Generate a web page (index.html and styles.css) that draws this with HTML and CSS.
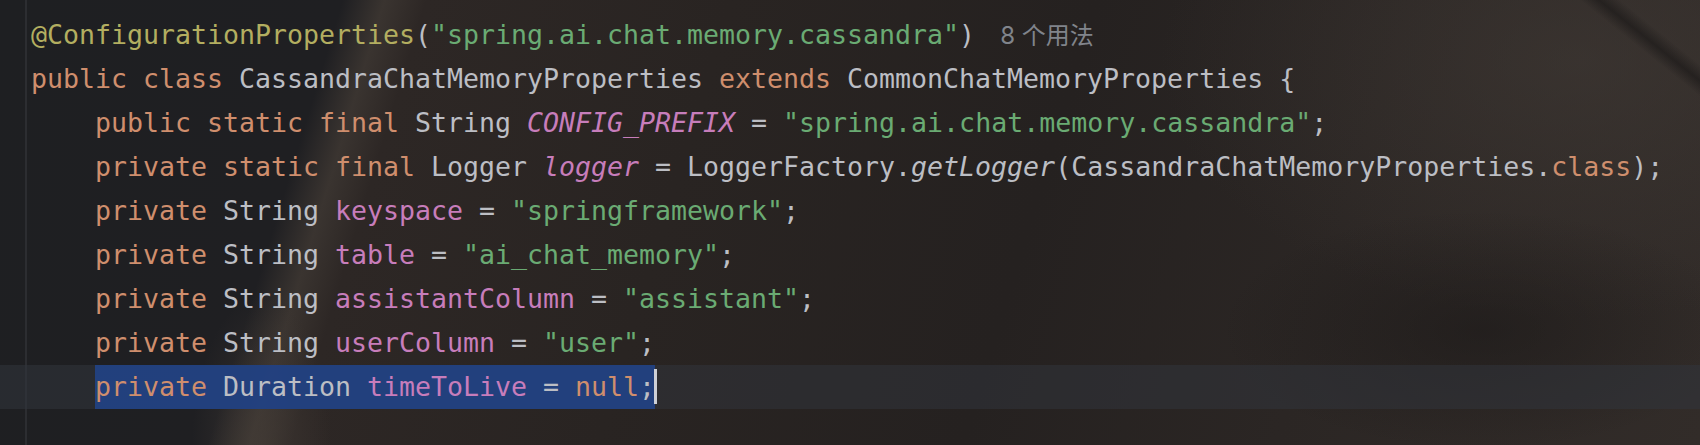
FILE: index.html
```html
<!DOCTYPE html>
<html lang="zh">
<head>
<meta charset="utf-8">
<title>CassandraChatMemoryProperties.java</title>
<link rel="stylesheet" href="styles.css">
</head>
<body>
<div class="editor">
  <div class="code">
    <div class="line"><span class="ann">@ConfigurationProperties</span>(<span class="str">"spring.ai.chat.memory.cassandra"</span>)<span class="hint">8 个用法</span></div>
    <div class="line"><span class="kw">public class</span> CassandraChatMemoryProperties <span class="kw">extends</span> CommonChatMemoryProperties {</div>
    <div class="line">    <span class="kw">public static final</span> String <span class="fld it">CONFIG_PREFIX</span> = <span class="str">"spring.ai.chat.memory.cassandra"</span>;</div>
    <div class="line">    <span class="kw">private static final</span> Logger <span class="fld it">logger</span> = LoggerFactory.<span class="it">getLogger</span>(CassandraChatMemoryProperties.<span class="kw">class</span>);</div>
    <div class="line">    <span class="kw">private</span> String <span class="fld">keyspace</span> = <span class="str">"springframework"</span>;</div>
    <div class="line">    <span class="kw">private</span> String <span class="fld">table</span> = <span class="str">"ai_chat_memory"</span>;</div>
    <div class="line">    <span class="kw">private</span> String <span class="fld">assistantColumn</span> = <span class="str">"assistant"</span>;</div>
    <div class="line">    <span class="kw">private</span> String <span class="fld">userColumn</span> = <span class="str">"user"</span>;</div>
    <div class="line current">    <span class="sel"><span class="kw">private</span> Duration <span class="fld">timeToLive</span> = <span class="kw">null</span>;</span><span class="caret"></span></div>
  </div>
</div>
</body>
</html>
```
FILE: styles.css
```css
html, body {
  margin: 0;
  padding: 0;
  background: #1e1f22;
}

.editor {
  width: 1700px;
  height: 445px;
  overflow: hidden;
  background:
    linear-gradient(to right, transparent 25px, #2c2d31 25px, #2c2d31 27px, transparent 27px),
    linear-gradient(38.7deg, transparent 1335px, rgba(22, 20, 20, 0.55) 1347px, transparent 1360px),
    radial-gradient(ellipse 260px 120px at 1480px 330px, rgba(22, 20, 20, 0.45), transparent),
    radial-gradient(ellipse 420px 260px at 1580px 60px, rgba(70, 63, 58, 0.45), transparent),
    radial-gradient(ellipse 70px 150px at 262px 445px, rgba(72, 64, 58, 0.55), transparent),
    linear-gradient(106.9deg,
      #1e1f22 0px,
      #1f1f22 328px,
      #3a3430 368px,
      #2d2725 408px,
      #292422 700px,
      #252120 1050px,
      #2b2624 1350px,
      #322c29 1756px);
}

.code {
  padding-top: 13px;
  font-family: "DejaVu Sans Mono", "Liberation Mono", monospace;
  font-size: 26.58px;
  color: #bcbec4;
}

.line {
  height: 44px;
  line-height: 44px;
  padding-left: 31px;
  white-space: pre;
}

.line.current {
  background: rgba(50, 52, 60, 0.55);
}

.ann { color: #b3ae60; }
.str { color: #6aab73; }
.kw { color: #cf8e6d; }
.fld { color: #c77dbb; }
.it { font-style: italic; }

.hint {
  margin-left: 25px;
  font-family: "Inter", "Noto Sans CJK SC", sans-serif;
  font-size: 24px;
  color: #80848b;
}

.sel {
  display: inline-block;
  height: 44px;
  vertical-align: top;
  background: rgba(33, 66, 131, 0.93);
}

.caret {
  display: inline-block;
  width: 3px;
  height: 35px;
  margin-top: 4px;
  margin-left: -1px;
  vertical-align: top;
  background: #ced0d6;
}
```
